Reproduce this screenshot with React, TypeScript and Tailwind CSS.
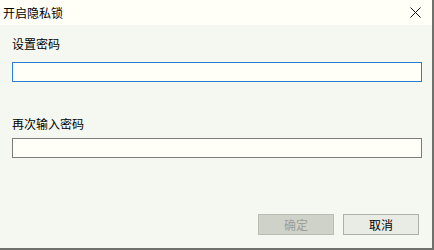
import { useState } from "react";

const font = { fontFamily: '"Noto Sans CJK SC", "Liberation Sans", sans-serif' };

export default function App() {
  const [pwd, setPwd] = useState("");
  const [again, setAgain] = useState("");

  return (
    <div
      className="w-[434px] h-[250px] flex flex-col bg-[#f5f8f0] border-r-2 border-b-2 border-[#6f716c] text-[12px] text-black"
      style={font}
    >
      {/* Title bar */}
      <div className="h-[25px] flex items-center justify-between bg-[#fffff8] pl-[3px] pr-[11px]">
        <span className="leading-4">开启隐私锁</span>
        <button className="w-[12px] h-[12px] flex items-center justify-center">
          <svg width="11" height="11" viewBox="0 0 11 11">
            <path d="M0.5 0.5 L10.5 10.5 M10.5 0.5 L0.5 10.5" stroke="#111" strokeWidth="1" />
          </svg>
        </button>
      </div>

      {/* Body */}
      <div className="flex-1 flex flex-col pl-3 pr-[10px]">
        <label className="mt-[11px] leading-4">设置密码</label>
        <input
          type="password"
          value={pwd}
          onChange={(e) => setPwd(e.target.value)}
          className="mt-[10px] h-5 w-full bg-[#fffff8] border border-[#2a7fd0] outline-none px-1"
        />

        <label className="mt-[34px] leading-4">再次输入密码</label>
        <input
          type="password"
          value={again}
          onChange={(e) => setAgain(e.target.value)}
          className="mt-[6px] h-5 w-full bg-[#fffff8] border border-[#7c7c7a] outline-none px-1"
        />

        <div className="mt-[56px] flex justify-end gap-[9px] pr-[3px]">
          <button
            disabled
            className="w-[76px] h-[21px] bg-[#cfd2c9] border border-[#b9bcb3] text-[#9c9e98] leading-4"
          >
            确定
          </button>
          <button className="w-[76px] h-[21px] bg-[#e9ece4] border border-[#adb0a8] leading-4">
            取消
          </button>
        </div>
      </div>
    </div>
  );
}
